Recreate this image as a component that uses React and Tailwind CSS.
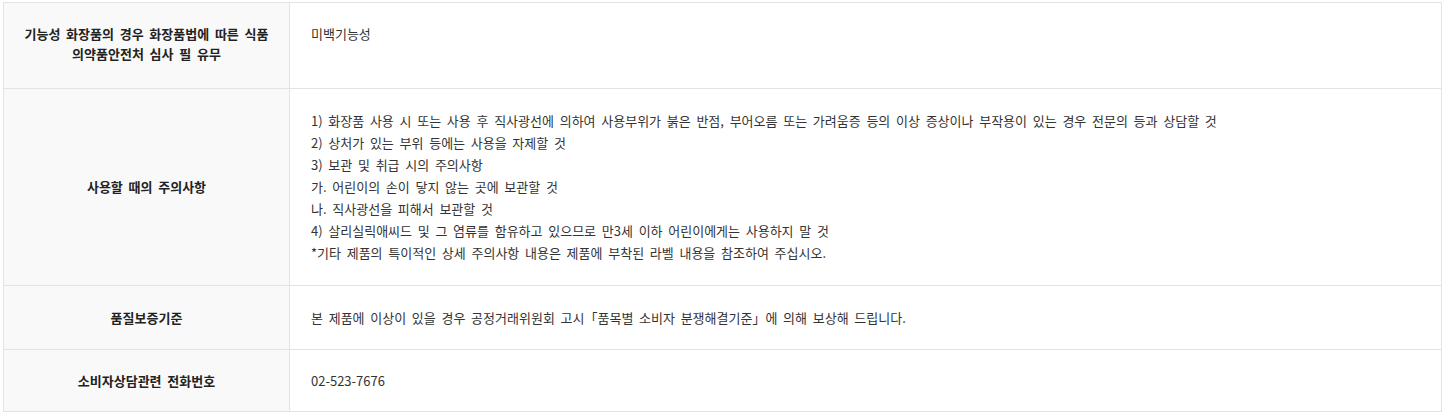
import React from "react";

const rows = [
  {
    head: ["기능성 화장품의 경우 화장품법에 따른 식품", "의약품안전처 심사 필 유무"],
    body: ["미백기능성"],
    top: true,
    pad: "pt-[21px] pb-[24px]",
  },
  {
    head: ["사용할 때의 주의사항"],
    body: [
      "1) 화장품 사용 시 또는 사용 후 직사광선에 의하여 사용부위가 붉은 반점, 부어오름 또는 가려움증 등의 이상 증상이나 부작용이 있는 경우 전문의 등과 상담할 것",
      "2) 상처가 있는 부위 등에는 사용을 자제할 것",
      "3) 보관 및 취급 시의 주의사항",
      "가. 어린이의 손이 닿지 않는 곳에 보관할 것",
      "나. 직사광선을 피해서 보관할 것",
      "4) 살리실릭애씨드 및 그 염류를 함유하고 있으므로 만3세 이하 어린이에게는 사용하지 말 것",
      "*기타 제품의 특이적인 상세 주의사항 내용은 제품에 부착된 라벨 내용을 참조하여 주십시오.",
    ],
    pad: "py-[21px]",
  },
  {
    head: ["품질보증기준"],
    body: ["본 제품에 이상이 있을 경우 공정거래위원회 고시「품목별 소비자 분쟁해결기준」에 의해 보상해 드립니다."],
    pad: "pt-[21px] pb-[20px]",
  },
  {
    head: ["소비자상담관련 전화번호"],
    body: ["02-523-7676"],
    pad: "pt-[20px] pb-[19px]",
  },
];

export default function App() {
  return (
    <div
      className="bg-white w-[1445px] h-[415px] pt-[2px] pl-[3px] text-[13px] [word-spacing:2.8px]"
      style={{ fontFamily: '"Noto Sans CJK KR", "Noto Sans", sans-serif' }}
    >
      <div className="w-[1439px] border-l border-t border-[#e3e3e3] grid grid-cols-[286px_1fr]">
        {rows.map((r, i) => (
          <React.Fragment key={i}>
            <div
              className={`bg-[#f9f9f9] border-r border-b border-[#e3e3e3] flex flex-col items-center justify-center text-center font-bold text-[#222] leading-[20px] ${r.pad}`}
            >
              {r.head.map((h, j) => (
                <div key={j}>{h}</div>
              ))}
            </div>
            <div
              className={`bg-white border-r border-b border-[#e3e3e3] flex flex-col ${
                r.top ? "justify-start pt-[21px]" : `justify-center ${r.pad}`
              } pl-[21px] text-[#333] leading-[22px]`}
            >
              {r.body.map((b, j) => (
                <div key={j} className={r.top ? "leading-[20px]" : ""}>
                  {b}
                </div>
              ))}
            </div>
          </React.Fragment>
        ))}
      </div>
    </div>
  );
}
